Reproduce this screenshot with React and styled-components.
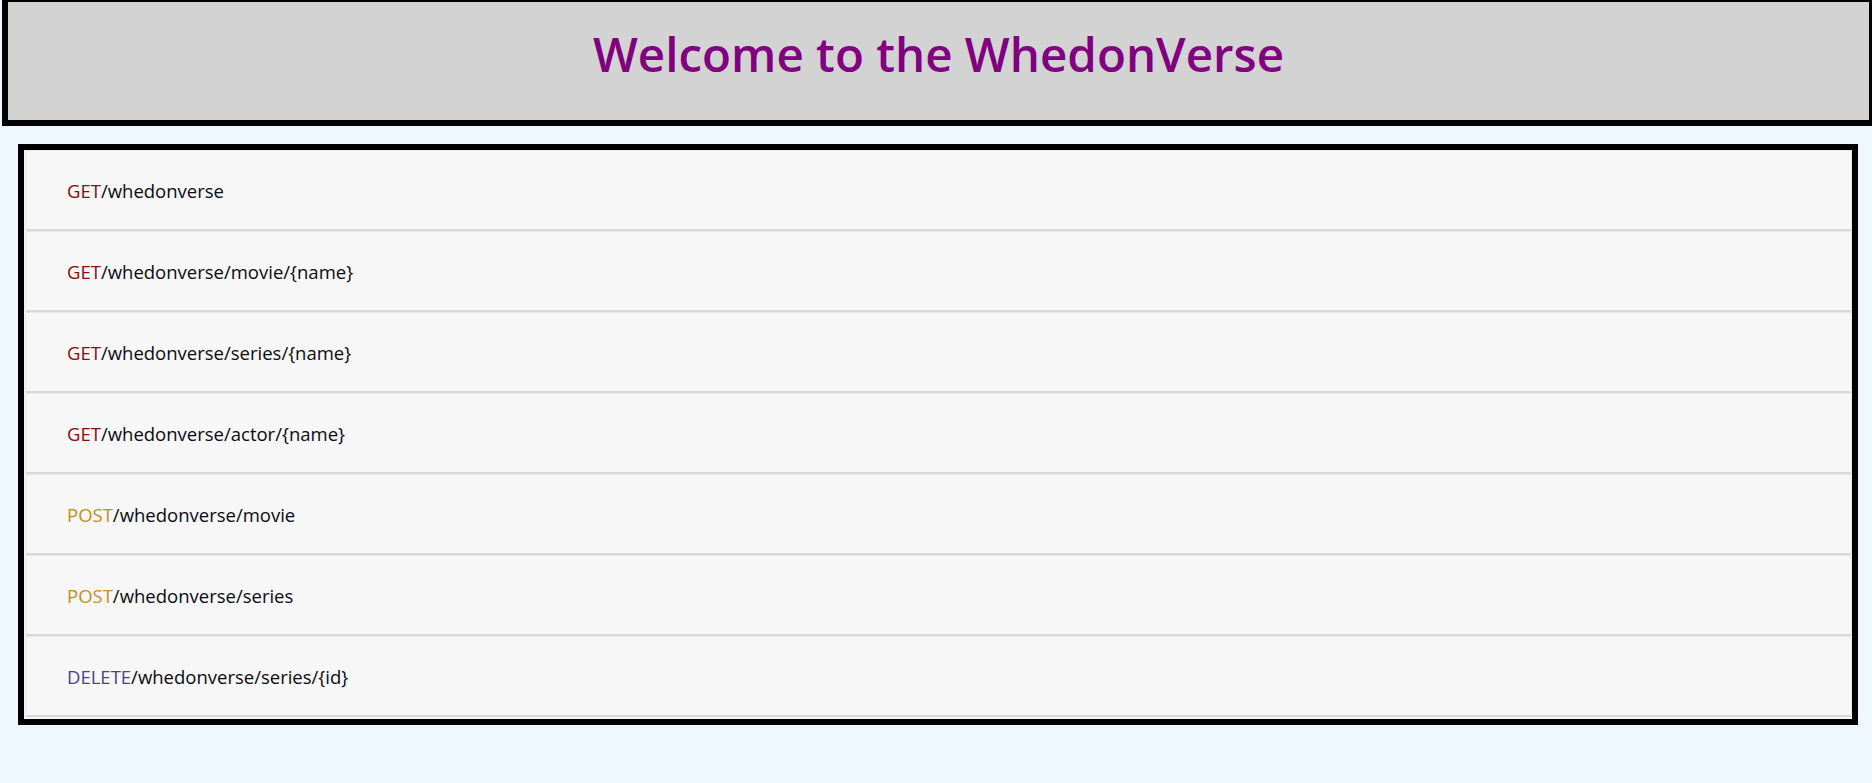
import React from "react"
import styled, { createGlobalStyle } from "styled-components"

const routes = [
    { method: "GET", path: "/whedonverse" },
    { method: "GET", path: "/whedonverse/movie/{name}" },
    { method: "GET", path: "/whedonverse/series/{name}" },
    { method: "GET", path: "/whedonverse/actor/{name}" },
    { method: "POST", path: "/whedonverse/movie" },
    { method: "POST", path: "/whedonverse/series" },
    { method: "DELETE", path: "/whedonverse/series/{id}" },
]

const methodColors = {
    GET: "#8b0a0a",
    POST: "#c18f25",
    DELETE: "#4b3f92",
}

const App = () => {
    return (
        <>
            <Global />
            <Header>
                <Title>Welcome to the WhedonVerse</Title>
            </Header>

            <List>
                {routes.map((r, i) => (
                    <Row key={i}>
                        <Method color={methodColors[r.method]}>{r.method}</Method>
                        <Path>{r.path}</Path>
                    </Row>
                ))}
            </List>
        </>
    )
}

export default App


const Global = createGlobalStyle`
body {
    margin: 0;
    background-color: aliceblue;
    font-family: "Open Sans", "Noto Sans", sans-serif;
    overflow-x: hidden;
    min-height: 100vh;
}
`;
const Header = styled.div`
margin: -4px -3px 0 2px;
height: 118px;
border: 6px solid black;
background-color: lightgray;
display: flex;
justify-content: center;
align-items: flex-start;
`;
const Title = styled.h1`
margin: 0;
padding-top: 17px;
font-size: 47.5px;
line-height: 70px;
font-weight: 600;
color: purple;
`;
const List = styled.div`
margin: 18px 14px 0 18px;
border: 6px solid black;
padding: 0 0 2px 1px;
display: flex;
flex-direction: column;
`;
const Row = styled.div`
height: 78px;
padding-left: 41px;
display: flex;
align-items: center;
background-color: #f7f7f7;
border: 1px solid #e6e6e6;
border-bottom: 2px solid #d9d9d9;
border-radius: 2px;
font-size: 18.5px;
color: #111;
`;
const Method = styled.span`
color: ${(p) => p.color};
`;
const Path = styled.span`
color: #0a0a12;
`;
